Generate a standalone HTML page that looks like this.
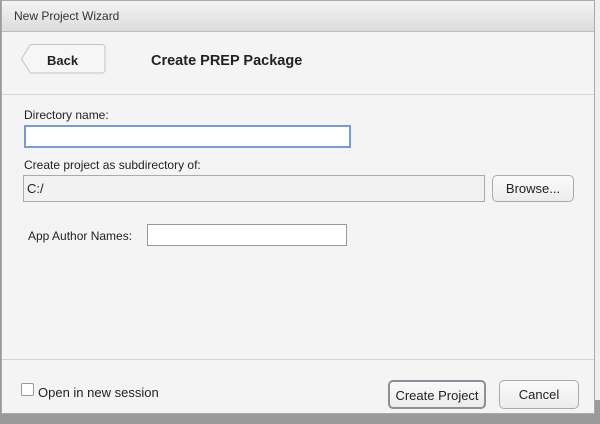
<!DOCTYPE html><html><head><style>
body{margin:0;width:600px;height:424px;background:#9a9a9a;position:relative;overflow:hidden;font-family:"Liberation Sans",sans-serif;font-size:12px;color:#222}
.dlg{position:absolute;left:1px;top:0;width:594px;height:414px;background:#f3f4f3;border:1px solid #aaa;box-sizing:border-box}
.tb{position:absolute;left:0;top:0;right:0;height:30px;background:linear-gradient(#f4f4f4,#dcdcdc);border-bottom:1px solid #bdbdbd;font-size:12px;line-height:30px;padding-left:12px;color:#333}
.a{position:absolute}
.inp{position:absolute;background:#fff;border:1px solid #999;box-sizing:border-box}
.btn{position:absolute;border:1px solid #aaa;border-radius:5px;background:linear-gradient(#fafafa,#ececec);text-align:center;box-sizing:border-box;font-size:13px}
</style></head><body>
<div class="a" style="left:594px;top:0;width:6px;height:400px;background:#f0f0f0"></div>
<div class="dlg">
<div class="tb">New Project Wizard</div>
<svg class="a" style="left:18px;top:42px" width="88" height="32"><path d="M10.5 1.5H82a3 3 0 0 1 3 3V27a3 3 0 0 1-3 3H10.5L1.5 15.75Z" fill="#f6f6f6" stroke="#c4c4c4"/></svg>
<div class="a" style="left:45px;top:52px;font-weight:bold;font-size:13px">Back</div>
<div class="a" style="left:149px;top:52px;font-weight:bold;font-size:14.5px">Create PREP Package</div>
<div class="a" style="left:0;right:0;top:93px;border-top:1px solid #d4d4d4"></div>
<div class="a" style="left:22px;top:107px">Directory name:</div>
<div class="inp" style="left:22px;top:124px;width:327px;height:23px;border:2px solid #7a9ad6"></div>
<div class="a" style="left:22px;top:157px">Create project as subdirectory of:</div>
<div class="inp" style="left:21px;top:174px;width:462px;height:27px;background:#f2f2f2;border-color:#aaa;padding:5px 3px;font-size:13px">C:/</div>
<div class="btn" style="left:490px;top:174px;width:82px;height:27px;line-height:25px">Browse...</div>
<div class="a" style="left:26px;top:228px">App Author Names:</div>
<div class="inp" style="left:145px;top:223px;width:200px;height:22px"></div>
<div class="a" style="left:0;right:0;top:358px;border-top:1px solid #d4d4d4"></div>
<div class="a" style="left:19px;top:382px;width:11px;height:11px;border:1px solid #999;border-radius:2px;background:#fff"></div>
<div class="a" style="left:36px;top:384px;font-size:13px">Open in new session</div>
<div class="btn" style="left:386px;top:379px;width:98px;height:29px;line-height:27px;border:2px solid #8a8f99">Create Project</div>
<div class="btn" style="left:497px;top:379px;width:80px;height:29px;line-height:27px">Cancel</div>
</div>
</body></html>
